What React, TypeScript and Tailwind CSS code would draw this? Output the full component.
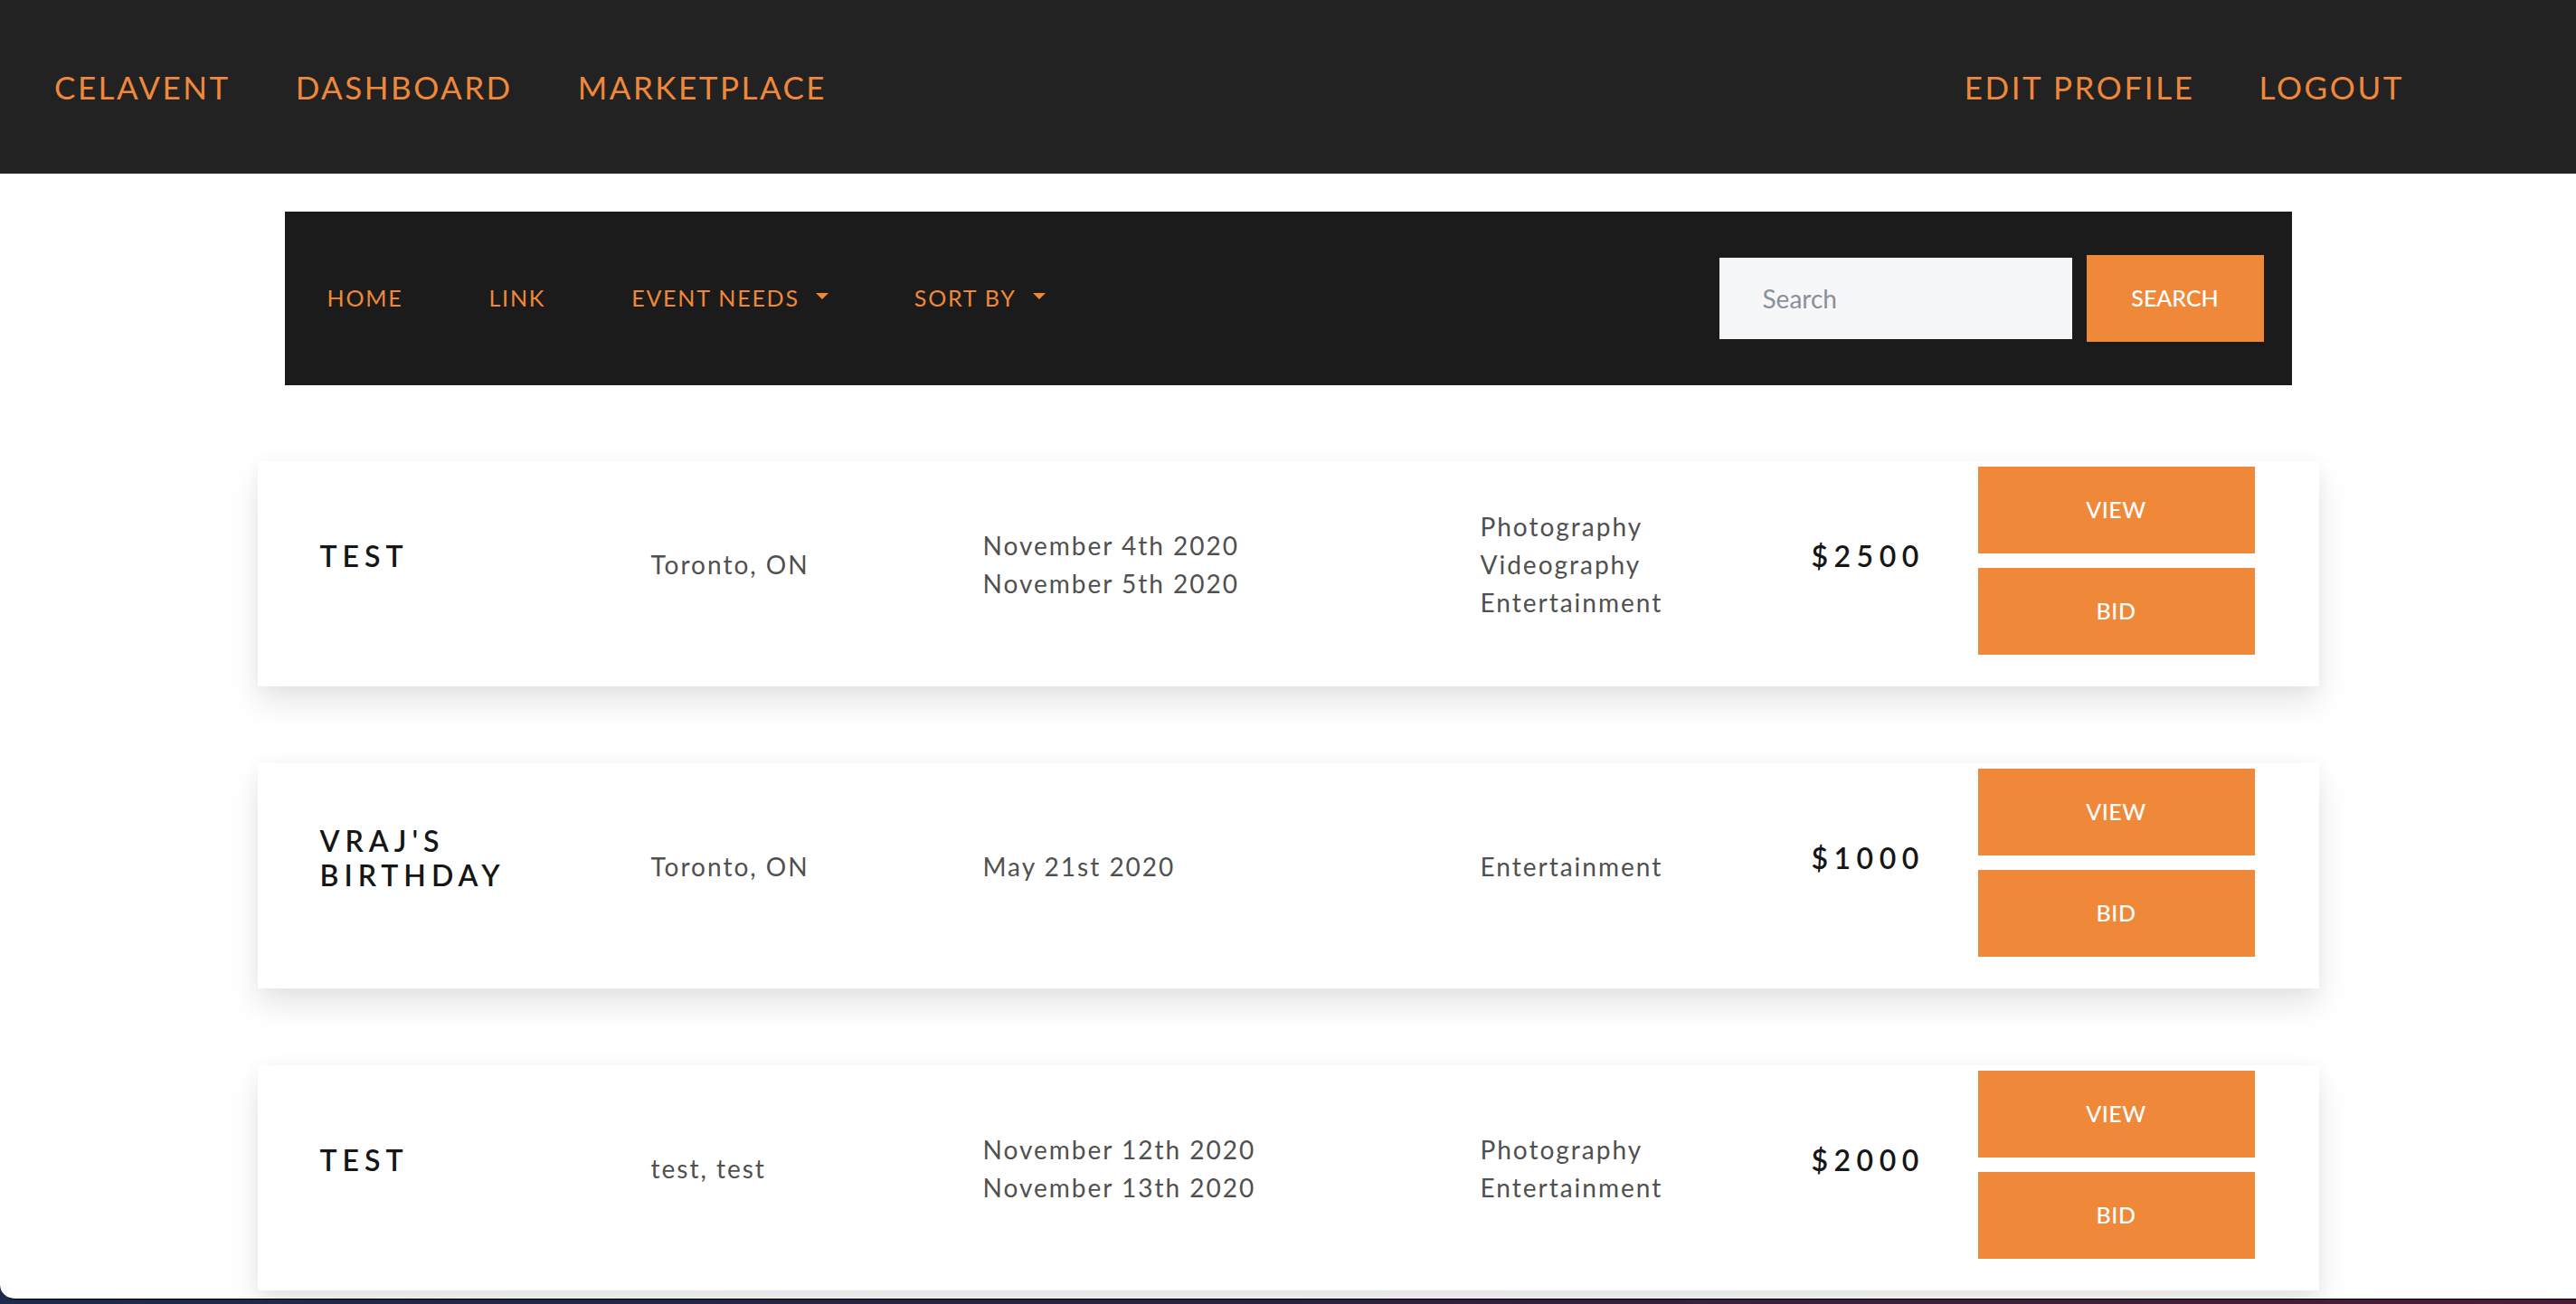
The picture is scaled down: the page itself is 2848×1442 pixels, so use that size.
import React from "react";

type EventRow = {
  title: string;
  location: string;
  dates: string[];
  needs: string[];
  price: string;
};

const rows: EventRow[] = [
  {
    title: "TEST",
    location: "Toronto, ON",
    dates: ["November 4th 2020", "November 5th 2020"],
    needs: ["Photography", "Videography", "Entertainment"],
    price: "$2500",
  },
  {
    title: "VRAJ'S BIRTHDAY",
    location: "Toronto, ON",
    dates: ["May 21st 2020"],
    needs: ["Entertainment"],
    price: "$1000",
  },
  {
    title: "TEST",
    location: "test, test",
    dates: ["November 12th 2020", "November 13th 2020"],
    needs: ["Photography", "Entertainment"],
    price: "$2000",
  },
];

function Caret() {
  return (
    <svg width="14" height="7" viewBox="0 0 14 7" className="ml-[18px] mb-[6px]">
      <path d="M0 0 L14 0 L7 7 Z" fill="#f0883a" />
    </svg>
  );
}

function Card({ row }: { row: EventRow }) {
  return (
    <div className="flex items-center h-[249px] bg-white pl-[69px] pr-[71px] shadow-[0_18px_32px_rgba(0,0,0,0.10),0_0_18px_rgba(0,0,0,0.03)]">
      <div className="w-[366px] mb-[40px]">
        <div className="max-w-[270px] text-[32px] leading-[38px] font-semibold tracking-[6px] text-[#161616]">
          {row.title}
        </div>
      </div>
      <div className="w-[367px] mb-[21px] text-[28px] leading-[42px] tracking-[2px] text-[#505050]">
        {row.location}
      </div>
      <div className="w-[550px] mb-[21px] text-[28px] leading-[42px] tracking-[2px] text-[#505050]">
        {row.dates.map((d) => (
          <div key={d}>{d}</div>
        ))}
      </div>
      <div className="w-[366px] mb-[21px] text-[28px] leading-[42px] tracking-[2px] text-[#505050]">
        {row.needs.map((n) => (
          <div key={n}>{n}</div>
        ))}
      </div>
      <div className="w-[184px] mb-[40px] text-[32px] leading-[38px] font-semibold tracking-[6.5px] text-[#161616]">
        {row.price}
      </div>
      <div className="w-[306px] mb-[29px] flex flex-col gap-[16px]">
        <button className="h-[96px] w-full bg-[#f0883a] text-white text-[25px] font-medium tracking-[0.5px]">
          VIEW
        </button>
        <button className="h-[96px] w-full bg-[#f0883a] text-white text-[25px] font-medium tracking-[0.5px]">
          BID
        </button>
      </div>
    </div>
  );
}

export default function App() {
  return (
    <div
      className="h-[1442px] w-[2848px] overflow-hidden bg-gradient-to-r from-[#1b2b4b] via-[#2a2140] to-[#4b1b36]"
      style={{ fontFamily: "Lato, 'Open Sans', sans-serif" }}
    >
      <div className="h-[1437px] bg-white rounded-bl-[16px] overflow-hidden border-b border-black">
        {/* Top nav */}
        <nav className="h-[192px] bg-[#222222] flex items-center justify-between pl-[60px] pr-[190px]">
          <div className="flex items-center gap-[72px] text-[35px] tracking-[2.5px] text-[#f0883a]">
            <span>CELAVENT</span>
            <span>DASHBOARD</span>
            <span>MARKETPLACE</span>
          </div>
          <div className="flex items-center gap-[71px] text-[35px] tracking-[2.6px] text-[#f0883a]">
            <span>EDIT PROFILE</span>
            <span>LOGOUT</span>
          </div>
        </nav>

        {/* Secondary nav */}
        <div className="mx-auto mt-[42px] w-[2219px] h-[192px] bg-[#1b1b1b] flex items-center justify-between pl-[47px] pr-[31px]">
          <div className="flex items-center gap-[95px] text-[25px] tracking-[1.8px] text-[#f0883a]">
            <span>HOME</span>
            <span>LINK</span>
            <span className="flex items-center">
              EVENT NEEDS
              <Caret />
            </span>
            <span className="flex items-center">
              SORT BY
              <Caret />
            </span>
          </div>
          <div className="flex items-center gap-[16px]">
            <div className="w-[390px] h-[90px] bg-[#f6f7f9] flex items-center pl-[48px] text-[28px] text-[#8a9099]">
              Search
            </div>
            <button className="w-[196px] h-[96px] bg-[#f0883a] text-white text-[25px] font-medium">
              SEARCH
            </button>
          </div>
        </div>

        {/* Cards */}
        <div className="mx-auto mt-[84px] w-[2279px] flex flex-col gap-[85px]">
          {rows.map((r, i) => (
            <Card key={i} row={r} />
          ))}
        </div>
      </div>
    </div>
  );
}
